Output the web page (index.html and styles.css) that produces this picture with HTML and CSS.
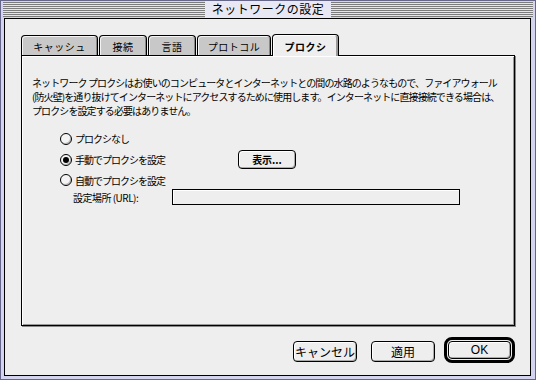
FILE: index.html
```html
<!DOCTYPE html>
<html lang="ja">
<head>
<meta charset="utf-8">
<title>ネットワークの設定</title>
<link rel="stylesheet" href="styles.css">
</head>
<body>
<div class="window">
  <div class="titlebar"><span class="title">ネットワークの設定</span></div>
  <div class="content">
    <div class="tabs">
      <div class="tab t1">キャッシュ</div>
      <div class="tab t2">接続</div>
      <div class="tab t3">言語</div>
      <div class="tab t4">プロトコル</div>
      <div class="tab sel">プロクシ</div>
    </div>
    <div class="pane">
      <p class="desc">ネットワーク プロクシはお使いのコンピュータとインターネットとの間の水路のようなもので、ファイアウォール<br>(防火壁)を通り抜けてインターネットにアクセスするために使用します。インターネットに直接接続できる場合は、<br>プロクシを設定する必要はありません。</p>
      <div class="options">
        <div class="opt"><span class="radio"></span><span class="lbl">プロクシなし</span></div>
        <div class="opt"><span class="radio on"></span><span class="lbl wide">手動でプロクシを設定</span><span class="btn show">表示...</span></div>
        <div class="opt"><span class="radio"></span><span class="lbl">自動でプロクシを設定</span></div>
        <div class="url"><span class="url-lbl">設定場所 (URL):</span><span class="field"></span></div>
      </div>
    </div>
    <div class="buttons">
      <span class="btn push cancel">キャンセル</span>
      <span class="btn push apply">適用</span>
      <span class="default"><span class="btn push ok">OK</span></span>
    </div>
  </div>
</div>
</body>
</html>
```

FILE: styles.css
```css
* { box-sizing: border-box; }
html, body { margin: 0; padding: 0; }
body {
  width: 536px;
  height: 380px;
  font-family: "Noto Sans CJK JP", "Noto Sans", sans-serif;
  color: #000;
  background: #d0d0ee;
}
.window {
  width: 536px;
  height: 380px;
  background: #d4d4f0;
  border: 1px solid #66668a;
  padding: 0 4px 3px 3px;
  display: flex;
  flex-direction: column;
}
.titlebar {
  height: 17px;
  margin: 0 -2px 0 -1px;
  padding: 1px 0;
  background: repeating-linear-gradient(to bottom, #e6e6ee 0 1px, #7c7c7c 1px 2px);
  background-clip: content-box;
  display: flex;
  justify-content: center;
  align-items: center;
}
.title {
  height: 17px;
  line-height: 16px;
  font-size: 12px;
  padding: 0 7px;
  background: #e8e8f4;
  margin-top: -2px;
  margin-bottom: -2px;
  letter-spacing: 0.5px;
}
.content {
  flex: 1;
  border: 1px solid #000;
  background: #eeeeee;
  padding: 15px 15px 0 16px;
  display: flex;
  flex-direction: column;
}
.tabs {
  display: flex;
  align-items: flex-end;
  gap: 1px;
  height: 22px;
  margin-bottom: -1px;
  position: relative;
  z-index: 1;
}
.tab {
  height: 20px;
  margin-bottom: 1px;
  border: 1px solid #000;
  border-bottom: none;
  border-radius: 4px 4px 0 0;
  background: #c8c8c8;
  box-shadow: inset 1px 1px 0 #f4f4f4, inset -1px 0 0 #888;
  font-size: 10px;
  letter-spacing: 0.5px;
  display: flex;
  align-items: center;
  justify-content: center;
  padding-top: 1px;
}
.t1 { width: 77px; }
.t2 { width: 48px; }
.t3 { width: 48px; }
.t4 { width: 74px; }
.sel {
  width: 67px;
  height: 22px;
  margin-bottom: 0;
  background: #eeeeee;
  font-weight: bold;
  box-shadow: inset 1px 1px 0 #fff, inset -2px 0 0 #999;
}
.pane {
  height: 271px;
  border: 1px solid #000;
  background: #eeeeee;
  box-shadow: inset 1px 1px 0 #fff, inset -1px -1px 0 #999, 1px 1px 0 #888;
}
.desc {
  margin: 0;
  padding: 20px 0 0 10px;
  font-size: 10px;
  line-height: 14px;
  letter-spacing: -0.9px;
  white-space: nowrap;
}
.options {
  margin: 10px 0 0 38px;
  font-size: 10px;
  letter-spacing: -1px;
}
.opt {
  height: 21px;
  display: flex;
  align-items: center;
}
.opt:nth-child(3) { height: 20px; }
.radio {
  width: 12px;
  height: 12px;
  border: 1px solid #000;
  border-radius: 50%;
  background: #f4f4f4;
  box-shadow: inset -1px -1px 0 #bbb;
  margin-right: 3px;
  display: flex;
  align-items: center;
  justify-content: center;
  flex: none;
}
.radio.on::after {
  content: "";
  width: 6px;
  height: 6px;
  border-radius: 50%;
  background: #000;
}
.lbl { white-space: nowrap; }
.wide { width: 163px; }
.btn {
  display: flex;
  align-items: center;
  justify-content: center;
  border: 1px solid #000;
  border-radius: 4px;
  background: #eeeeee;
  box-shadow: inset 1px 1px 0 #fff, inset -1px -1px 0 #aaa;
  white-space: nowrap;
}
.show {
  width: 58px;
  height: 19px;
  font-weight: bold;
  letter-spacing: 0;
}
.url {
  height: 16px;
  margin-top: -1px;
  display: flex;
  align-items: center;
  padding-left: 13px;
}
.url-lbl {
  width: 99px;
  white-space: nowrap;
  letter-spacing: -0.5px;
}
.field {
  width: 288px;
  height: 16px;
  border: 1px solid #000;
  background: #eeeeee;
  box-shadow: inset 1px 1px 0 #fff;
}
.buttons {
  margin-top: 11px;
  display: flex;
  justify-content: flex-end;
  align-items: center;
  height: 26px;
}
.push {
  height: 21px;
  font-size: 12px;
  margin-top: 2px;
}
.cancel { width: 64px; margin-right: 14px; letter-spacing: 0; }
.apply { width: 64px; margin-right: 9px; }
.default {
  width: 71px;
  height: 26px;
  border: 3px solid #000;
  border-radius: 8px;
  padding: 1px;
  display: flex;
}
.ok {
  width: 100%;
  height: 100%;
  margin-top: 0;
  border-radius: 4px;
  font-family: "Liberation Sans", "Noto Sans", sans-serif;
  font-size: 12px;
}
```
